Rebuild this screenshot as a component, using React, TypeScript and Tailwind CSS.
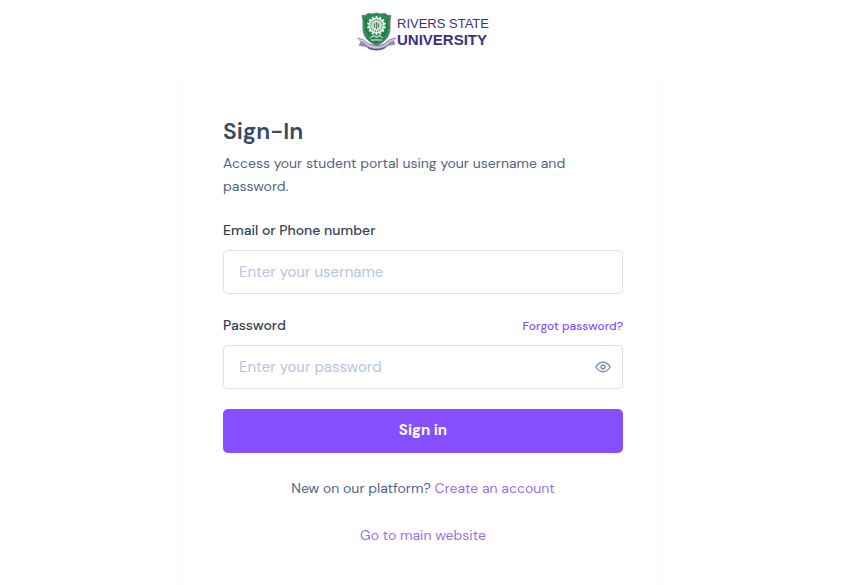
import { useState } from "react";

function Crest() {
  const teeth = Array.from({ length: 14 }, (_, i) => (i * 360) / 14);
  return (
    <svg width="40" height="40" viewBox="0 0 40 40" aria-hidden="true" className="shrink-0">
      <path d="M5 3.500 Q9 4 11 1.500 Q15 2.500 19.500 1 Q24 2.500 28 1.500 Q30 4 34 3.500 Q32.500 8 33 14 C33.500 24 29 29 19.500 34 C10 29 5.500 24 6 14 Q6.500 8 5 3.500Z" fill="#2b8a55" stroke="#6f8478" strokeWidth="1" />
      <path d="M9 7 Q8 23 19.500 30 Q31 23 30 7" fill="none" stroke="#187642" strokeWidth="1.500" />
      <circle cx="19.500" cy="13.500" r="8" fill="#dfe9e2" />
      {teeth.map((a) => (
        <rect key={a} x="18.700" y="4" width="1.700" height="3" fill="#edf4ef" transform={`rotate(${a} 19.5 13.5)`} />
      ))}
      <circle cx="19.500" cy="13.500" r="5.700" fill="none" stroke="#5d8a70" strokeWidth="1.500" strokeDasharray="1.300 1" />
      <circle cx="19.500" cy="13.500" r="3.600" fill="#b9d3c4" />
      <path d="M19.500 10v7M17.500 11.500v4M21.500 11.500v4" stroke="#3f765a" strokeWidth="0.900" />
      <path d="M13 26q3-3 6.500-1 3.500-2 6.500 1M15.500 22.500l4 3 4-3M14 28h11" fill="none" stroke="#a9cfb8" strokeWidth="1.300" />
      <path d="M0 25.500 L7 27.500 Q12 33 19.500 33 Q27 33 32 27.500 L39.500 25 L37 29 L38.500 32.500 L31 34 Q26 38.500 19.500 38.500 Q13 38.500 9 35 L1.500 33.500 L3.500 30Z" fill="#9588bb" />
      <path d="M2 28 L6.500 29 Q12 35.500 19.500 35.500 Q27 35.500 33 29 L37.500 27.500" fill="none" stroke="#d5cfe6" strokeWidth="1.400" />
      <path d="M11 35.500 Q19.500 40 28 35.500" fill="none" stroke="#5d4c94" strokeWidth="1.200" />
    </svg>
  );
}

export default function App() {
  const [visible, setVisible] = useState(false);
  return (
    <div className="flex min-h-screen flex-col items-center bg-white pr-4 font-['DM_Sans','Inter',sans-serif] text-sm text-[#526484]">
      <header className="flex items-center pt-3 pb-7 text-[#3b3184]">
        <Crest />
        <div className="flex flex-col font-['Liberation_Sans',Arial,sans-serif] whitespace-nowrap">
          <span className="text-[13px] leading-[15px]">RIVERS STATE</span>
          <span className="text-[15px] leading-[17px] font-bold">UNIVERSITY</span>
        </div>
      </header>
      <main className="w-full max-w-[480px] grow border-x border-[#fafafc] px-[39px] pt-[35px] pb-9">
        <h1 className="text-[23px] leading-8 font-semibold text-[#364a63]">Sign-In</h1>
        <p className="mt-[5px] leading-[23px]">Access your student portal using your username and password.</p>
        <form onSubmit={(e) => e.preventDefault()}>
          <label htmlFor="username" className="mt-5 block leading-6 font-medium text-[#344357]">
            Email or Phone number
          </label>
          <input
            id="username"
            type="text"
            placeholder="Enter your username"
            className="mt-2 block h-11 w-full rounded-[5px] border border-[#dbdfea] px-[15px] text-[15px] outline-none placeholder:text-[#b6c6e3]"
          />
          <div className="mt-5 flex items-center justify-between leading-[23px] font-medium">
            <label htmlFor="password" className="text-[#344357]">Password</label>
            <a href="#forgot" className="text-xs text-[#854fff]">Forgot password?</a>
          </div>
          <div className="relative mt-2">
            <input
              id="password"
              type={visible ? "text" : "password"}
              placeholder="Enter your password"
              className="block h-11 w-full rounded-[5px] border border-[#dbdfea] pr-10 pl-[15px] text-[15px] outline-none placeholder:text-[#b6c6e3]"
            />
            <button
              type="button"
              aria-label="Show password"
              onClick={() => setVisible(!visible)}
              className="absolute inset-y-0 right-0 flex w-10 items-center justify-center text-[#8094ae]"
            >
              <svg width="16" height="16" viewBox="0 0 16 16" fill="none" stroke="currentColor" strokeWidth="1.500" aria-hidden="true">
                <path d="M1 8 Q3.500 3.300 8 3.300 Q12.500 3.300 15 8 Q12.500 12.700 8 12.700 Q3.500 12.700 1 8Z" strokeLinejoin="round" />
                <circle cx="8" cy="8" r="1.900" />
              </svg>
            </button>
          </div>
          <button type="submit" className="mt-5 h-11 w-full rounded-[5px] bg-[#854fff] text-[15px] font-bold text-white">
            Sign in
          </button>
        </form>
        <p className="mt-6 text-center leading-[23px]">
          New on our platform? <a href="#register" className="text-[#9b70ed]">Create an account</a>
        </p>
        <p className="mt-6 text-center leading-[23px]">
          <a href="#home" className="text-[#9b70ed]">Go to main website</a>
        </p>
      </main>
    </div>
  );
}
